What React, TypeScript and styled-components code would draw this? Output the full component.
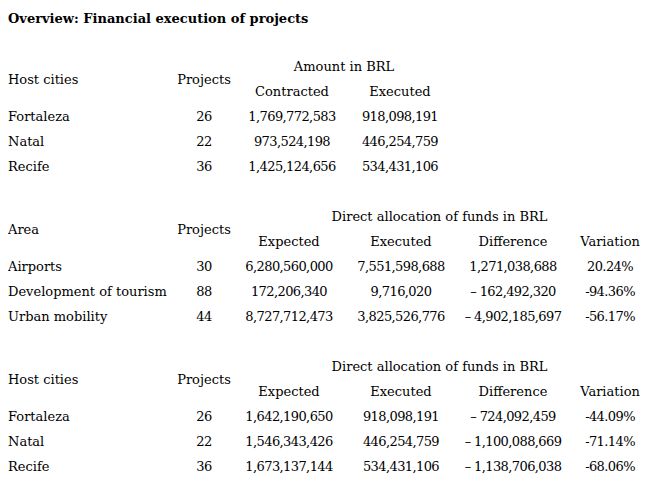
import React from "react";
import styled, { createGlobalStyle } from "styled-components";

const Global = createGlobalStyle`
  html, body { margin: 0; padding: 0; background: #fff; }
  body {
    margin: 8px;
    color: #000;
    font-family: "DejaVu Serif", "Liberation Serif", serif;
    font-size: 13px;
  }
`;

const Page = styled.div`
  display: flex;
  flex-direction: column;
  gap: 25px;
`;

const Title = styled.div`
  font-weight: bold;
  font-size: 13px;
  line-height: 21px;
`;

const Table = styled.table<{ $w: number }>`
  width: ${(p) => p.$w}px;
  table-layout: fixed;
  border-collapse: collapse;
  border-spacing: 0;
`;

const Row = styled.tr`
  height: 25px;
`;

const Label = styled.td`
  padding: 0;
  text-align: left;
  vertical-align: middle;
  white-space: nowrap;
`;

const Cell = styled.td<{ $padL?: number; $num?: boolean }>`
  padding: 0 0 0 ${(p) => p.$padL ?? 0}px;
  text-align: center;
  vertical-align: middle;
  white-space: nowrap;
  letter-spacing: ${(p) => (p.$num ? "-0.6px" : "normal")};
`;

type Col = { w: number; padL?: number };

const cols1: Col[] = [{ w: 164 }, { w: 64 }, { w: 112 }, { w: 104 }];
const cols2: Col[] = [
  { w: 164 },
  { w: 64 },
  { w: 106 },
  { w: 118 },
  { w: 106 },
  { w: 77, padL: 11 },
];

type Props = {
  cols: Col[];
  labelHead: string;
  group: string;
  subs: string[];
  rows: string[][];
};

function DataTable({ cols, labelHead, group, subs, rows }: Props) {
  const total = cols.reduce((s, c) => s + c.w, 0);
  return (
    <Table $w={total}>
      <colgroup>
        {cols.map((c, i) => (
          <col key={i} style={{ width: c.w }} />
        ))}
      </colgroup>
      <tbody>
        <Row>
          <Label rowSpan={2}>{labelHead}</Label>
          <Cell rowSpan={2}>Projects</Cell>
          <Cell colSpan={cols.length - 2}>{group}</Cell>
        </Row>
        <Row>
          {subs.map((s, i) => (
            <Cell key={i} $padL={cols[i + 2].padL}>
              {s}
            </Cell>
          ))}
        </Row>
        {rows.map((r, ri) => (
          <Row key={ri}>
            <Label>{r[0]}</Label>
            {r.slice(1).map((v, i) => (
              <Cell key={i} $num $padL={cols[i + 1].padL}>
                {v}
              </Cell>
            ))}
          </Row>
        ))}
      </tbody>
    </Table>
  );
}

export default function App() {
  return (
    <>
      <Global />
      <Page>
        <Title>Overview: Financial execution of projects</Title>
        <DataTable
          cols={cols1}
          labelHead="Host cities"
          group="Amount in BRL"
          subs={["Contracted", "Executed"]}
          rows={[
            ["Fortaleza", "26", "1,769,772,583", "918,098,191"],
            ["Natal", "22", "973,524,198", "446,254,759"],
            ["Recife", "36", "1,425,124,656", "534,431,106"],
          ]}
        />
        <DataTable
          cols={cols2}
          labelHead="Area"
          group="Direct allocation of funds in BRL"
          subs={["Expected", "Executed", "Difference", "Variation"]}
          rows={[
            ["Airports", "30", "6,280,560,000", "7,551,598,688", "1,271,038,688", "20.24%"],
            ["Development of tourism", "88", "172,206,340", "9,716,020", "– 162,492,320", "-94.36%"],
            ["Urban mobility", "44", "8,727,712,473", "3,825,526,776", "– 4,902,185,697", "-56.17%"],
          ]}
        />
        <DataTable
          cols={cols2}
          labelHead="Host cities"
          group="Direct allocation of funds in BRL"
          subs={["Expected", "Executed", "Difference", "Variation"]}
          rows={[
            ["Fortaleza", "26", "1,642,190,650", "918,098,191", "– 724,092,459", "-44.09%"],
            ["Natal", "22", "1,546,343,426", "446,254,759", "– 1,100,088,669", "-71.14%"],
            ["Recife", "36", "1,673,137,144", "534,431,106", "– 1,138,706,038", "-68.06%"],
          ]}
        />
      </Page>
    </>
  );
}
